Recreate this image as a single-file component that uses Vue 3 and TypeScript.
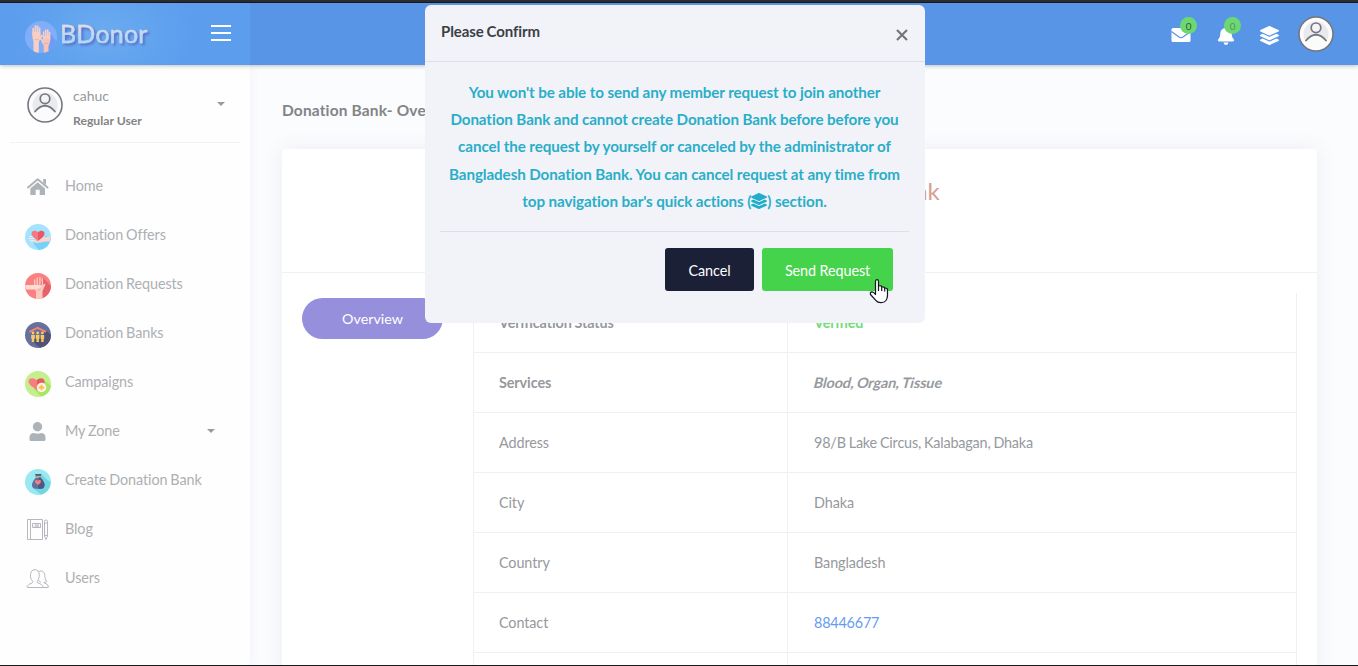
<script setup lang="ts">
interface NavItem {
  label: string
  icon: string
  caret?: boolean
}
interface Row {
  label: string
  value: string
  kind?: string
}

const navItems: NavItem[] = [
  { label: 'Home', icon: 'home' },
  { label: 'Donation Offers', icon: 'offers' },
  { label: 'Donation Requests', icon: 'requests' },
  { label: 'Donation Banks', icon: 'banks' },
  { label: 'Campaigns', icon: 'campaigns' },
  { label: 'My Zone', icon: 'zone', caret: true },
  { label: 'Create Donation Bank', icon: 'create' },
  { label: 'Blog', icon: 'blog' },
  { label: 'Users', icon: 'users' },
]

const rows: Row[] = [
  { label: 'Verification Status', value: 'Verified', kind: 'verified' },
  { label: 'Services', value: 'Blood, Organ, Tissue', kind: 'services' },
  { label: 'Address', value: '98/B Lake Circus, Kalabagan, Dhaka', kind: 'address' },
  { label: 'City', value: 'Dhaka' },
  { label: 'Country', value: 'Bangladesh' },
  { label: 'Contact', value: '88446677', kind: 'link' },
  { label: '', value: '' },
]

const messageLines: string[] = [
  "You won't be able to send any member request to join another",
  'Donation Bank and cannot create Donation Bank before before you',
  'cancel the request by yourself or canceled by the administrator of',
  'Bangladesh Donation Bank. You can cancel request at any time from',
]
</script>

<template>
  <div class="page">
    <div class="strip"></div>
    <header class="topbar">
      <div class="brand">
        <svg class="logo" viewBox="0 0 32 32">
          <circle cx="16" cy="16" r="16" fill="#82adf8" />
          <path d="M25 12 L31 20 A16 16 0 0 1 19 32Z" fill="#6c9cf3" />
          <g fill="#f8cfc4" stroke="#f8cfc4" stroke-linecap="round">
            <path d="M7.500 11h7.700l.3 6-1.700 4v10.800q-3-.3-5.300-1.500V21L7.500 17Z" stroke="none" />
            <path d="M8.200 14V7.500M10.400 13V5M12.500 13V5M14.600 14V7M15 18l1.800-3.500" stroke-width="1.700" fill="none" />
            <path d="M18.500 15h6.500l.2 6-1.700 4v5.500l-4.700 1.300V25L17.500 21Z" stroke="none" fill="#f7c3b4" />
            <path d="M18.700 18v-7M20.800 17V9M22.800 17V9M24.600 18v-6.500M18 22l-1.300-3.500" stroke-width="1.600" fill="none" />
          </g>
          <path d="M9.500 18.500q3 1 4.500-1M19 22.500q3 .5 4.500-1" stroke="#dea698" stroke-width=".7" fill="none" />
        </svg>
        <span class="brand-name">BDonor</span>
        <span class="burger"><i></i><i></i><i></i></span>
      </div>
      <div class="actions">
        <span class="action mail">
          <svg width="20" height="16" viewBox="0 0 20 16"><path d="M2 1h16a1.500 1.500 0 0 1 1.500 1.500v11A1.500 1.500 0 0 1 18 15H2a1.500 1.500 0 0 1-1.500-1.500v-11A1.500 1.500 0 0 1 2 1Z" fill="#fff" /><path d="M.5 4.500 8 10q2 1.300 4 0l7.500-5.500" fill="none" stroke="#5995e7" stroke-width="1.200" /></svg>
          <b class="badge">0</b>
        </span>
        <span class="action bell">
          <svg width="18" height="20" viewBox="0 0 18 20"><path d="M9 1a1.200 1.200 0 0 1 1.200 1.200v.7C13 3.500 14.700 5.600 14.700 8.600c0 3.200.8 4.500 2 5.700.8.900.3 2.200-.9 2.200H2.200c-1.200 0-1.700-1.300-.9-2.200 1.200-1.200 2-2.500 2-5.700 0-3 1.700-5.100 4.500-5.700v-.7A1.200 1.200 0 0 1 9 1ZM6.600 17.500h4.800a2.400 2.400 0 0 1-4.800 0Z" fill="#fff" /></svg>
          <b class="badge light">0</b>
        </span>
        <svg class="layers" viewBox="0 0 512 512"><path fill="#fff" d="M12.400 148l232.900 105.700c6.800 3.100 14.500 3.100 21.300 0l233-105.700c16.500-7.500 16.500-32.500 0-40L266.600 2.300a25.600 25.600 0 0 0-21.300 0L12.400 108c-16.500 7.500-16.500 32.500 0 40zm487.200 88.300l-58.100-26.300-161.600 73.300a57.600 57.600 0 0 1-47.700 0L70.500 210l-58.100 26.300c-16.500 7.500-16.500 32.500 0 40l232.900 105.600c6.800 3.100 14.500 3.100 21.300 0l233-105.600c16.500-7.500 16.500-32.500 0-40zm0 127.800l-57.900-26.200-161.900 73.400a57.600 57.600 0 0 1-47.600 0L70.300 337.900l-57.900 26.200c-16.500 7.500-16.500 32.500 0 40l232.900 105.600c6.800 3.100 14.500 3.100 21.300 0l233-105.600c16.500-7.500 16.500-32.500 0-40z" /></svg>
        <svg class="avatar" viewBox="0 0 36 36"><circle cx="18" cy="18" r="17" fill="#fbfbfc" stroke="#74777e" stroke-width="1.600" /><circle cx="18" cy="18" r="12.500" fill="#e9eaee" /><path d="M6 25q12-12 24 0l-4 6.500H10Z" fill="#fbfbfc" /><circle cx="18" cy="11.800" r="4.800" fill="#f4f4f6" stroke="#74777e" stroke-width="1.700" /><path d="M8 24.500q10-11.500 20 0" fill="none" stroke="#74777e" stroke-width="1.800" stroke-linecap="round" /></svg>
      </div>
    </header>

    <div class="body">
      <aside class="sidebar">
        <div class="profile">
          <svg class="avatar" viewBox="0 0 36 36"><circle cx="18" cy="18" r="17" fill="#fbfbfc" stroke="#74777e" stroke-width="1.600" /><circle cx="18" cy="18" r="12.500" fill="#e9eaee" /><path d="M6 25q12-12 24 0l-4 6.500H10Z" fill="#fbfbfc" /><circle cx="18" cy="11.800" r="4.800" fill="#f4f4f6" stroke="#74777e" stroke-width="1.700" /><path d="M8 24.500q10-11.500 20 0" fill="none" stroke="#74777e" stroke-width="1.800" stroke-linecap="round" /></svg>
          <div class="who"><span class="user">cahuc</span><span class="role">Regular User</span></div>
          <i class="caret"></i>
        </div>
        <nav>
          <div v-for="item in navItems" :key="item.label" class="nav-item">
            <svg v-if="item.icon === 'home'" class="nav-icon" viewBox="0 0 26 26"><path d="M3 12.500 12.700 4.300l9.800 8.200" fill="none" stroke="#adb4b9" stroke-width="2" stroke-linecap="round" stroke-linejoin="round" /><path d="M18.200 4H21v6l-2.800-2.300ZM12.700 7.300l7.300 6.200V20h-5.300v-5.300h-4V20H5.300v-6.500Z" fill="#adb4b9" /></svg>
            <svg v-else-if="item.icon === 'offers'" class="nav-icon" viewBox="0 0 26 26"><circle cx="13" cy="13" r="13" fill="#a4e3fd" /><path d="M7 18 14 26a13 13 0 0 0 12-12l-5-2Z" fill="#75d2f8" /><path d="M4 12.500h5M3.500 14.500h7M4.500 16.500h6M6 18h7" stroke="#f4e6e5" stroke-width="1.100" /><path d="M9 17q3 0 6-2l3-2h7.700q0 3-1 4.500H20q-4 1.500-9 1Z" fill="#fbd5cb" /><path d="M13 17C9 14 6.500 12 6.500 9.600c0-3.500 4.700-4 6.500-1Z" fill="#f9777e" /><path d="M13 17c4-3 6.500-5 6.500-7.400 0-3.500-4.700-4-6.500-1Z" fill="#e95864" /></svg>
            <svg v-else-if="item.icon === 'requests'" class="nav-icon" viewBox="0 0 26 26"><circle cx="13" cy="13" r="13" fill="#fb8082" /><path d="M18 5l8 8a13 13 0 0 1-9 12.300L11 20Z" fill="#e7616b" /><path d="M9.700 7v7M12.300 5v9M14.900 4.500v9M17.400 6v8" stroke="#fbc9bd" stroke-width="1.400" stroke-linecap="round" /><path d="M10 12h8l2-1.500q1 1-.5 3l-2 4.500v7.300q-3 1-6.500.5V19L10 16Z" fill="#fbc9bd" /><path d="M.3 12H13q3 .2 3 1.500T13 15.300l-3 1.200H.5Z" fill="#fddcd3" /><path d="M15.500 15.500q-.5 2-3 2.200" stroke="#e8a297" fill="none" stroke-width=".7" /></svg>
            <svg v-else-if="item.icon === 'banks'" class="nav-icon" viewBox="0 0 26 26"><circle cx="13" cy="13" r="13" fill="#66709f" /><path d="M22 9l4 4a13 13 0 0 1-11 12.800L7 19Z" fill="#515276" /><path d="m4.500 9.800 8-4 8.500 4" fill="none" stroke="#f1836d" stroke-width="2" /><g fill="#fbc95f"><circle cx="8" cy="11" r="1.400" /><circle cx="12.700" cy="11" r="1.400" /><circle cx="17.400" cy="11" r="1.400" /><path d="M6.200 13h3.600v3.800h-.6V20H6.800v-3.200h-.6ZM10.900 13h3.600v3.800h-.6V20h-2.400v-3.200h-.6ZM15.600 13h3.600v3.800h-.6V20h-2.400v-3.200h-.6Z" /></g></svg>
            <svg v-else-if="item.icon === 'campaigns'" class="nav-icon" viewBox="0 0 26 26"><circle cx="13" cy="13" r="13" fill="#c5ef8e" /><path d="m19 9 7 6A13 13 0 0 1 16 25.700L9 18Z" fill="#abe565" /><path d="M11.500 19C6 15 3.500 13 3.500 10.500c0-4 5.500-4.500 8-1Z" fill="#fb7b80" /><path d="M11.500 19c5.500-4 8-6 8-8.500 0-4-5.500-4.500-8-1Z" fill="#e85b65" /><circle cx="16.500" cy="16.500" r="4.700" fill="#fff4eb" /><path d="M16.500 13.700v5.600M13.700 16.500h5.600" stroke="#fbbd4c" stroke-width="1.900" /></svg>
            <svg v-else-if="item.icon === 'zone'" class="nav-icon" viewBox="0 0 26 26"><circle cx="12.500" cy="6.700" r="4.700" fill="#adb4b9" /><path d="M4.500 20v-2.500q0-4.500 4.500-4.500 3.500 1.300 7 0 4.500 0 4.500 4.500V19.500q0 1.500-1.500 1.500H6q-1.500 0-1.500-1Z" fill="#adb4b9" /></svg>
            <svg v-else-if="item.icon === 'create'" class="nav-icon" viewBox="0 0 26 26"><circle cx="13" cy="13" r="13" fill="#98e9f2" /><path d="m16 5 9.500 8.500A13 13 0 0 1 16 25.700L8 19Z" fill="#71d5e2" /><path d="M10 5h6.500l-1 3h-4.300Z" fill="#53607f" /><path d="M10 7.500h6" stroke="#d7a75d" stroke-width="1.200" /><path d="M11 8.500h4.500q4 4 4 7.500 0 3.700-3.500 3.700h-5.500Q7 19.700 7 16q0-3.500 4-7.500Z" fill="#5e719f" /><path d="M14 8.500h1.500q4 4 4 7.500 0 3.700-3.500 3.700h-3Z" fill="#4d5886" /><path d="M13 16c-2-1.500-3-2.300-3-3.500 0-2 2.300-2 3-.5.700-1.500 3-1.500 3 .5 0 1.200-1 2-3 3.500Z" fill="#f37f86" /></svg>
            <svg v-else-if="item.icon === 'blog'" class="nav-icon line" viewBox="0 0 26 26"><path d="M2.500 1.500h15v20h-15ZM5.500 1.500v20M7.500 5.500h8v4h-8ZM9.500 7h4.500M9.500 8.200h4.500M19.500 5V3.500Q19.500 2 21 2t1.500 1.500V18L21 21.500 19.500 18ZM19.500 5h3M19.500 17.500h3" /></svg>
            <svg v-else class="nav-icon line" viewBox="0 0 26 26"><path d="M2.300 20.500v-1.300q1-2 4.700-3.200c1-.5 1-1.500.2-2.300-1.400-1.700-2-3.500-1.700-6C5.800 4.500 7.200 2.700 10 2.700s4 2 4.200 4.600c.1 2.800-.3 4.700-1.600 6.200-.8 1-.6 2 .4 2.500 3 1.200 4.600 1.800 4.700 3.500v1H2.300ZM13.500 4.500c4-1.600 6 .3 6.300 4 .1 2.500.5 4.500 2 6-1.200.8-2 .8-3 1 .5.900 4.500 1.500 4.400 3.500v1.500h-5.500M13.500 13c.6 1.500 1 2 2.300 2" /></svg>
            <span>{{ item.label }}</span>
            <i v-if="item.caret" class="caret"></i>
          </div>
        </nav>
      </aside>

      <main class="content">
        <h1>Donation Bank- Overview</h1>
        <section class="card">
          <div class="card-head"><h2>Bangladesh Donation Bank</h2></div>
          <div class="card-body">
            <button class="pill">Overview</button>
            <div class="table">
              <div v-for="(row, i) in rows" :key="i" class="row" :class="row.kind">
                <div class="cell key">{{ row.label }}</div>
                <div class="cell val"><span>{{ row.value }}</span></div>
              </div>
            </div>
          </div>
        </section>
      </main>
    </div>
    <div class="bottom-line"></div>

    <div class="modal">
      <div class="modal-head">
        <h3>Please Confirm</h3>
        <svg class="close" viewBox="0 0 12 12"><path d="m1 1 10 10m0-10-10 10" stroke="#747679" stroke-width="2.200" /></svg>
      </div>
      <div class="message">
        <div v-for="line in messageLines" :key="line">{{ line }}</div>
        <div>top navigation bar's quick actions (<svg viewBox="0 0 512 512"><path fill="#20aec8" d="M12.400 148l232.900 105.700c6.800 3.100 14.500 3.100 21.300 0l233-105.700c16.500-7.500 16.500-32.500 0-40L266.600 2.300a25.600 25.600 0 0 0-21.300 0L12.400 108c-16.500 7.500-16.500 32.500 0 40zm487.200 88.300l-58.100-26.300-161.600 73.300a57.600 57.600 0 0 1-47.700 0L70.500 210l-58.100 26.300c-16.500 7.500-16.500 32.500 0 40l232.900 105.600c6.800 3.100 14.500 3.100 21.300 0l233-105.600c16.500-7.500 16.500-32.500 0-40zm0 127.800l-57.900-26.200-161.900 73.400a57.600 57.600 0 0 1-47.600 0L70.300 337.900l-57.900 26.200c-16.500 7.500-16.500 32.500 0 40l232.900 105.600c6.800 3.100 14.500 3.100 21.300 0l233-105.600c16.500-7.500 16.500-32.500 0-40z" /></svg>) section.</div>
      </div>
      <div class="buttons">
        <button class="cancel">Cancel</button>
        <button class="send">Send Request</button>
      </div>
    </div>

    <svg class="cursor" width="20" height="26" viewBox="0 0 20 26"><path d="M6.500 15V3.500C6.500 1 9.500 1 9.500 3.500V8q3-.8 3.200 1 2.600-.6 3 1 2.800-.2 2.800 2v5.500q0 3-1.500 5-1.500 2.200-5 2.200-3.500 0-5.200-2.400L1.500 16.500Q.8 14 3 13.800q1.500 0 3.500 2.700Z" fill="#fff" stroke="#14161e" stroke-width="1.200" stroke-linejoin="round" /><path d="M9.500 8v5M12.700 9v4M15.700 10v3.500" stroke="#14161e" stroke-width="1.200" /></svg>
  </div>
</template>

<style>
body {
  margin: 0;
  overflow: hidden;
}
</style>

<style scoped>
* {
  box-sizing: border-box;
}
.page {
  position: relative;
  width: 1358px;
  height: 666px;
  display: flex;
  flex-direction: column;
  overflow: hidden;
  background: #fbfcfe;
  font-family: Lato, "Liberation Sans", sans-serif;
  font-size: 14.400px;
  letter-spacing: -0.100px;
  word-spacing: -0.600px;
  color: #96999d;
}
h1, h2, h3 {
  margin: 0;
}
.strip {
  height: 3px;
  flex: none;
  background: #2d2d2e;
  border-bottom: 1px solid #161719;
}
.topbar {
  height: 62px;
  flex: none;
  display: flex;
  justify-content: space-between;
  background: #5995e7;
  box-shadow: 0 1px 4px rgba(40, 50, 60, 0.3);
  z-index: 1;
}
.brand {
  width: 250px;
  display: flex;
  align-items: center;
  padding-left: 25px;
  background: radial-gradient(ellipse 90px 60px at 105px 30px, #6aabf0, #5c9dee);
}
.logo {
  width: 32px;
  height: 32px;
  margin-top: 6px;
}
.brand-name {
  margin: -3px 0 0 3px;
  width: 151px;
  font-size: 25px;
  line-height: 30px;
  letter-spacing: 0.200px;
  color: transparent;
  -webkit-text-stroke: 0.400px rgba(196, 218, 244, 0.8);
  background: linear-gradient(#f0dcd8 20%, #b4d8f4 65%);
  background-clip: text;
  -webkit-background-clip: text;
  filter: drop-shadow(2px 2px 1px #5a71cb);
}
.burger {
  width: 20px;
  display: flex;
  flex-direction: column;
  gap: 5px;
  margin-top: -3px;
}
.burger i {
  height: 2px;
  background: #fff;
}
.actions {
  display: flex;
  align-items: center;
  padding: 0 24px 0 0;
}
.action {
  position: relative;
  display: flex;
}
.mail {
  width: 20px;
  margin: 2px 26px 0 0;
}
.bell {
  width: 18px;
  margin: 1px 25px 0 0;
}
.badge {
  position: absolute;
  left: 9px;
  top: -10px;
  width: 17px;
  height: 17px;
  border-radius: 50%;
  background: #6bd970;
  color: #3b5540;
  font-size: 10px;
  font-weight: 400;
  line-height: 18px;
  text-align: center;
}
.bell .badge {
  left: 7px;
  top: -8px;
}
.badge.light {
  color: #658b70;
}
.layers {
  width: 19px;
  height: 19px;
  margin: 2px 19px 0 0;
}
.avatar {
  width: 36px;
  height: 36px;
}
.body {
  flex: 1;
  min-height: 0;
  display: flex;
}
.sidebar {
  width: 250px;
  flex: none;
  background: #fefefe;
  box-shadow: 0 0 12px rgba(60, 80, 110, 0.060);
}
.profile {
  height: 78px;
  margin: 0 10px;
  padding: 1px 15px 0 17px;
  border-bottom: 1px solid #f3f3f5;
  display: flex;
  align-items: center;
}
.profile .avatar {
  margin-top: 2px;
}
.who {
  display: flex;
  flex-direction: column;
  gap: 8px;
  margin-left: 10px;
  padding-top: 8px;
  flex: 1;
}
.user {
  font-size: 14px;
  line-height: 17px;
  letter-spacing: 0;
  color: #96999b;
}
.role {
  font-size: 12.200px;
  line-height: 17px;
  font-weight: 700;
  letter-spacing: 0;
  word-spacing: 0;
  color: #828486;
}
.caret {
  border: 4px solid transparent;
  border-top-color: #999c9f;
  border-bottom: 0;
}
nav {
  padding-top: 19px;
}
.nav-item {
  height: 49px;
  display: flex;
  align-items: center;
  padding: 0 35px 0 25px;
  color: #adb0b3;
}
.nav-item span {
  flex: 1;
  margin: -1px 0 0 14px;
  line-height: 20px;
}
.nav-item .caret {
  margin-top: -1px;
}
.nav-icon {
  width: 26px;
  height: 26px;
  margin-top: 3px;
}
.line {
  fill: none;
  stroke: #b6b8be;
  stroke-width: 1;
}
.content {
  flex: 1;
  padding: 0 41px 0 32px;
}
h1 {
  height: 84px;
  padding-top: 35px;
  font-size: 15.500px;
  line-height: 20px;
  letter-spacing: 0.150px;
  word-spacing: 0;
  color: #828486;
}
.card {
  height: 600px;
  background: #fff;
  border-radius: 4px;
  box-shadow: 0 0 20px rgba(90, 110, 140, 0.100);
}
.card-head {
  height: 124px;
  border-bottom: 1px solid #f0f1f3;
  text-align: center;
}
h2 {
  padding-top: 27px;
  font-size: 24px;
  line-height: 30px;
  font-weight: 400;
  color: #d69e8f;
}
.card-body {
  display: flex;
  padding: 20px 20px 0;
}
.pill {
  width: 141px;
  height: 41px;
  margin: 5px 30px 0 0;
  border: 0;
  border-radius: 21px;
  background: #9690dc;
  color: #fff;
  font: inherit;
  font-size: 14.300px;
}
.table {
  flex: 1;
  border-left: 1px solid #f0f0f4;
  border-right: 1px solid #f0f0f4;
}
.row {
  height: 60px;
  display: flex;
  border-bottom: 1px solid #f0f0f4;
}
.cell {
  padding: 0 25px;
  line-height: 60px;
}
.val {
  padding-left: 26px;
}
.val span {
  display: inline-block;
}
.key {
  width: 314px;
  border-right: 1px solid #f0f0f4;
}
.verified,
.services {
  font-weight: 700;
}
.verified .val {
  color: #74dc78;
}
.services .val span {
  transform: skewX(-14deg);
}
.address .val {
  letter-spacing: -0.180px;
}
.link .val {
  color: #659cf0;
  letter-spacing: -0.200px;
}
.bottom-line {
  position: absolute;
  left: 0;
  right: 0;
  bottom: 0;
  height: 1px;
  background: #17181a;
  z-index: 2;
}
.modal {
  position: absolute;
  left: 425px;
  top: 5px;
  width: 500px;
  height: 318px;
  border-radius: 6px;
  background: #f2f3f9;
  z-index: 3;
}
.modal-head {
  height: 57px;
  display: flex;
  justify-content: space-between;
  padding: 16px 17px 0 16px;
  border-bottom: 1px solid #dee0e7;
}
h3 {
  font-size: 15px;
  line-height: 21px;
  color: #3b3f46;
}
.close {
  width: 12px;
  height: 12px;
  margin-top: 8px;
}
.message {
  height: 170px;
  margin: 0 16px 0 15px;
  padding-top: 17px;
  border-bottom: 1px solid #dddfe6;
  color: #2aaec8;
  font-size: 15.200px;
  font-weight: 700;
  line-height: 27.300px;
  letter-spacing: -0.100px;
  word-spacing: 0;
  text-align: center;
  white-space: nowrap;
}
.message svg {
  width: 16px;
  height: 16px;
  vertical-align: -2px;
}
.message > div {
  display: flow-root;
  height: 27.300px;
}
.message > div:nth-child(3) {
  margin-top: -0.500px;
  margin-bottom: 0.500px;
}
.buttons {
  display: flex;
  justify-content: flex-end;
  gap: 8px;
  padding: 16px 32px 0 0;
}
.buttons button {
  height: 43px;
  border: 0;
  border-radius: 3px;
  color: #fff;
  font: inherit;
  letter-spacing: -0.100px;
  padding: 1px 0 0;
}
.cancel {
  width: 89px;
  background: #1b2036;
}
.buttons .send {
  width: 131px;
  background: #45d34b;
}
.cursor {
  position: absolute;
  left: 869px;
  top: 278px;
  z-index: 4;
}
</style>
